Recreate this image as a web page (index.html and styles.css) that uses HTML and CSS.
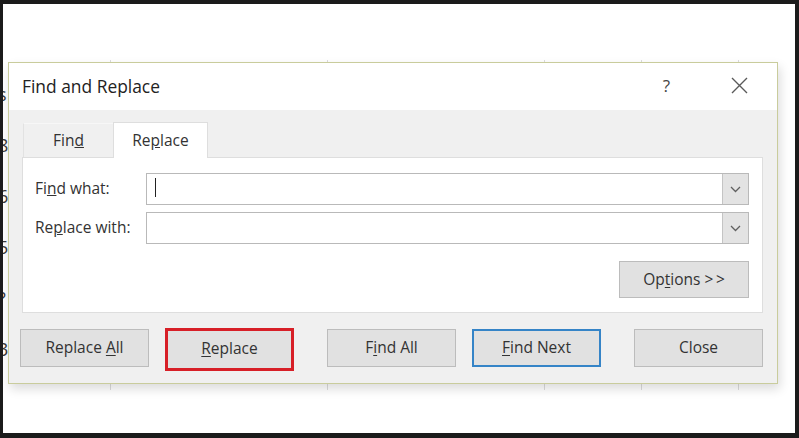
FILE: index.html
```html
<!DOCTYPE html>
<html lang="en">
<head>
<meta charset="utf-8">
<title>Find and Replace</title>
<link rel="stylesheet" href="styles.css">
</head>
<body>
<div class="screen">
  <div class="edge">
    <span>s</span><span>8</span><span>6</span><span>5</span><span>?</span><span>3</span>
  </div>
  <div class="sheet">
    <div class="col c1"></div>
    <div class="col c2"></div>
    <div class="col c2"></div>
    <div class="col c3"></div>
    <div class="col c3"></div>
    <div class="col c4"></div>
  </div>

  <div class="dialog">
    <div class="titlebar">
      <span class="title">Find and Replace</span>
      <span class="help">?</span>
      <svg class="close" width="17" height="17" viewBox="0 0 17 17"><path d="M1 1L16 16M16 1L1 16" stroke="#5a5a5a" stroke-width="1.4" fill="none"/></svg>
    </div>
    <div class="body">
      <div class="tabs">
        <div class="tab">Fin<u>d</u></div>
        <div class="tab active">Re<u>p</u>lace</div>
      </div>
      <div class="panel">
        <div class="field">
          <label class="label">Fi<u>n</u>d what:</label>
          <div class="combo">
            <div class="text"><span class="caret"></span></div>
            <div class="drop"><svg width="11" height="7" viewBox="0 0 11 7"><path d="M1 1L5.5 5.5L10 1" stroke="#606060" stroke-width="1.3" fill="none"/></svg></div>
          </div>
        </div>
        <div class="field">
          <label class="label">Re<u>p</u>lace with:</label>
          <div class="combo">
            <div class="text"></div>
            <div class="drop"><svg width="11" height="7" viewBox="0 0 11 7"><path d="M1 1L5.5 5.5L10 1" stroke="#606060" stroke-width="1.3" fill="none"/></svg></div>
          </div>
        </div>
        <div class="options-row">
          <button class="btn options">Op<u>t</u>ions &gt;&#8201;&gt;</button>
        </div>
      </div>
      <div class="actions">
        <div class="group">
          <button class="btn">Replace <u>A</u>ll</button>
          <button class="btn marked"><u>R</u>eplace</button>
        </div>
        <div class="group">
          <button class="btn">F<u>i</u>nd All</button>
          <button class="btn default"><u>F</u>ind Next</button>
        </div>
        <button class="btn">Close</button>
      </div>
    </div>
  </div>
</div>
</body>
</html>
```

FILE: styles.css
```css
* { box-sizing: border-box; }

html, body {
  margin: 0;
  padding: 0;
  background: #1b1b1b;
}

.screen {
  position: relative;
  width: 799px;
  height: 438px;
  border-top: 4px solid #1b1b1b;
  border-left: 3px solid #1b1b1b;
  border-right: 4px solid #1b1b1b;
  border-bottom: 5px solid #1b1b1b;
  background: #ffffff;
  overflow: hidden;
  display: flex;
  font-family: "Open Sans", "Noto Sans", sans-serif;
  color: #333;
}

.edge {
  width: 5px;
  flex: none;
  overflow: hidden;
  display: flex;
  flex-direction: column;
  padding-top: 65px;
  font-size: 18px;
  line-height: 51px;
  color: #3a3a3a;
}
.edge span {
  display: block;
  text-indent: -5px;
}

.sheet {
  display: flex;
  height: 330px;
  margin-top: 56px;
  flex: 1;
}
.col {
  border-right: 1px solid #dcdcdc;
  flex: none;
}
.c1 { width: 103px; }
.c2 { width: 217px; }
.c3 { width: 97px; }
.c4 { flex: 1; border-right: none; }

.dialog {
  position: absolute;
  left: 5px;
  top: 58px;
  width: 770px;
  border: 1px solid #c9cc9c;
  background: #f0f0f0;
  box-shadow: 2px 5px 10px rgba(0, 0, 0, 0.14);
  display: flex;
  flex-direction: column;
}

.titlebar {
  height: 47px;
  background: #ffffff;
  display: flex;
  align-items: center;
  padding: 0 29px 0 13px;
}
.title {
  font-size: 17.4px;
  color: #222;
  flex: 1;
  padding-bottom: 2px;
}
.help {
  font-size: 17px;
  color: #444;
  margin-right: 61px;
  padding-bottom: 2px;
}
.close { display: block; margin-bottom: 2px; }

.body {
  padding: 12px 14px 12px 13px;
  display: flex;
  flex-direction: column;
}

.tabs {
  display: flex;
  align-items: flex-end;
  padding-left: 1px;
  height: 35px;
}
.tab {
  width: 90px;
  height: 34px;
  display: flex;
  align-items: center;
  justify-content: center;
  font-size: 15.5px;
  color: #333;
  background: #f0f0f0;
  border-top: 1px solid #f7f7f7;
  border-left: 1px solid #e2e2e2;
  padding-bottom: 2px;
}
.tab.active {
  width: 95px;
  height: 36px;
  margin-bottom: -1px;
  background: #ffffff;
  border: 1px solid #dedede;
  border-bottom: none;
  position: relative;
  z-index: 1;
}

.panel {
  height: 156px;
  background: #ffffff;
  border: 1px solid #dedede;
  padding: 15px 13px 0 12px;
  display: flex;
  flex-direction: column;
}

.field {
  display: flex;
  align-items: center;
  height: 32px;
  margin-bottom: 7px;
}
.label {
  width: 111px;
  flex: none;
  font-size: 15.5px;
  color: #333;
  padding-bottom: 2px;
}
.combo {
  flex: 1;
  height: 32px;
  display: flex;
  border: 1px solid #b9b9b9;
  background: #ffffff;
}
.text {
  flex: 1;
  padding: 4px 8px;
}
.caret {
  display: block;
  width: 1px;
  height: 19px;
  background: #222;
}
.drop {
  width: 26px;
  background: #e3e3e3;
  border-left: 1px solid #c4c4c4;
  display: flex;
  align-items: center;
  justify-content: center;
}

.options-row {
  display: flex;
  justify-content: flex-end;
  margin-top: 10px;
}

.btn {
  width: 129px;
  height: 38px;
  background: #e1e1e1;
  border: 1px solid #bcbcbc;
  font-family: "Open Sans", "Noto Sans", sans-serif;
  font-size: 15.5px;
  color: #333;
  padding: 0 0 2px 0;
  margin: 0;
}
.options {
  width: 130px;
  height: 37px;
}
.btn u { text-underline-offset: 2px; }

.actions {
  display: flex;
  align-items: flex-start;
  gap: 33px;
  margin-top: 16px;
  margin-left: -2px;
}
.group {
  display: flex;
  align-items: flex-start;
  gap: 16px;
}
.marked {
  border: 3px solid #d71f27;
  height: 43px;
  margin-top: -1px;
  padding-bottom: 4px;
}
.default {
  border: 2px solid #3584c7;
}
```
